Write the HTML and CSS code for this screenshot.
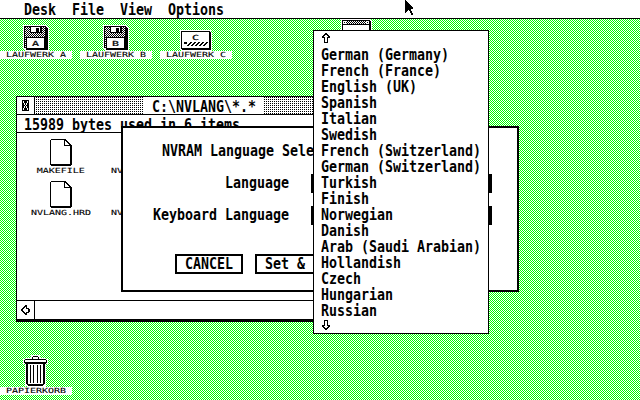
FILE: index.html
```
<!DOCTYPE html>
<html lang="en">
<head>
<meta charset="utf-8">
<title>Desktop</title>
<link rel="stylesheet" href="styles.css">
</head>
<body>
<div class="screen">
  <svg class="wallpaper" width="640" height="400" shape-rendering="crispEdges">
    <defs><pattern id="green" width="2" height="2" patternUnits="userSpaceOnUse"><rect width="2" height="2" fill="#ffffff"/><path d="M0 0h1v1H0zM1 1h1v1H1z" fill="#00ff00"/></pattern></defs>
    <rect width="640" height="400" fill="url(#green)"/>
  </svg>
  <nav class="menubar">
    <span class="t w4">Desk</span><span class="t w4">File</span><span class="t w4">View</span><span class="t w7">Options</span>
  </nav>

  <div class="icon drive-a">
    <svg width="26" height="26" viewBox="0 0 26 26" shape-rendering="crispEdges">
      <path d="M0 0h23l3 3v23H2L0 24z" fill="#fff"/>
      <path d="M1 1h21l3 3v21H3l-2-2z"/>
      <path d="M2 2h20v22H2z" fill="url(#dither)"/>
      <path d="M7 1h12v7H7z"/><path d="M8 2h9v5H8z" fill="#fff"/><path d="M13 3h3v4h-3z"/>
      <path d="M3 12h19v12H3z"/><path d="M4 13h17v10H4z" fill="#fff"/>
      <text x="9" y="21" textLength="7" lengthAdjust="spacingAndGlyphs" class="letter">A</text>
    </svg>
    <div class="label"><span class="s">LAUFWERK A</span></div>
  </div>
  <div class="icon drive-b">
    <svg width="26" height="26" viewBox="0 0 26 26" shape-rendering="crispEdges">
      <path d="M0 0h23l3 3v23H2L0 24z" fill="#fff"/>
      <path d="M1 1h21l3 3v21H3l-2-2z"/>
      <path d="M2 2h20v22H2z" fill="url(#dither)"/>
      <path d="M7 1h12v7H7z"/><path d="M8 2h9v5H8z" fill="#fff"/><path d="M13 3h3v4h-3z"/>
      <path d="M3 12h19v12H3z"/><path d="M4 13h17v10H4z" fill="#fff"/>
      <text x="9" y="21" textLength="7" lengthAdjust="spacingAndGlyphs" class="letter">B</text>
    </svg>
    <div class="label"><span class="s">LAUFWERK B</span></div>
  </div>
  <div class="icon drive-c">
    <svg width="32" height="21" viewBox="0 0 32 21" shape-rendering="crispEdges">
      <path d="M0 0h31v2h1v19H1v-2H0z" fill="#fff"/>
      <path d="M1 1h29v1h1v18H2v-1H1z"/><path d="M2 2h27v16H2z" fill="#fff"/>
      <path d="M4 12h3v2H4z"/>
      <path d="M10 12h2v1h-1v1h-1v1H9v1H7v-1h1v-1h1v-1h1zM14 12h2v1h-1v1h-1v1h-1v1h-2v-1h1v-1h1v-1h1zM18 12h2v1h-1v1h-1v1h-1v1h-2v-1h1v-1h1v-1h1zM22 12h2v1h-1v1h-1v1h-1v1h-2v-1h1v-1h1v-1h1zM26 12h2v1h-1v1h-1v1h-1v1h-2v-1h1v-1h1v-1h1z"/>
      <text x="12" y="10" textLength="7" lengthAdjust="spacingAndGlyphs" class="letter">C</text>
    </svg>
    <div class="label"><span class="s">LAUFWERK C</span></div>
  </div>
  <div class="icon hidden-icon">
    <svg width="31" height="14" viewBox="0 0 31 14" shape-rendering="crispEdges">
      <path d="M0 0h30v1h1v13H0z" fill="#fff"/>
      <path d="M1 1h28v1h1v12H1z"/><path d="M5 2h20v3H5z" fill="url(#dither)"/>
      <path d="M2 2h3v3H2zM25 2h3v3h-3zM2 6h26v8H2z" fill="#fff"/><path d="M3 3h1v1H3zM26 3h1v1h-1z"/>
    </svg>
  </div>
  <div class="icon trash">
    <svg width="26" height="32" viewBox="0 0 26 32" shape-rendering="crispEdges">
      <path d="M8 0h9v3h6v1h2v5h-2v22h-1v1H4v-1H2V9H0V4h2V3h6z" fill="#fff"/>
      <path d="M10 1h5v1h1v2h7v1h1v3h-1v1h-1v20h-1v1h-1v1H5v-1H4v-1H3V9H2V8H1V5h1V4h7V2h1z"/>
      <path d="M10 2h5v2h-5zM2 5h21v2H2zM5 9h15v20H5z" fill="#fff"/>
      <path d="M7 10h1v18H7zM10 10h1v18h-1zM14 10h1v18h-1zM17 10h1v18h-1z"/>
    </svg>
    <div class="label"><span class="s">PAPIERKORB</span></div>
  </div>

  <section class="window">
    <header class="titlebar">
      <div class="closer"><svg width="8" height="11" viewBox="0 0 8 11" shape-rendering="crispEdges"><path d="M0 0h7v11H0z"/><path d="M1 1h1v2H1zM5 1h1v2H5zM2 3h1v2H2zM4 3h1v2H4zM3 5h1v1H3zM2 6h1v2H2zM4 6h1v2H4zM1 8h1v2H1zM5 8h1v2H5z" fill="#fff"/></svg></div>
      <div class="title"><span class="t w13">C:\NVLANG\*.*</span></div>
    </header>
    <div class="info"><span class="t">15989 bytes used in 6 items</span></div>
    <div class="files">
      <div class="file"><svg width="22" height="27" viewBox="0 0 22 27" shape-rendering="crispEdges"><use href="#doc"/></svg><span class="s">MAKEFILE</span></div>
      <div class="file"><span class="s cut">NV</span></div>
      <div class="file"><svg width="22" height="27" viewBox="0 0 22 27" shape-rendering="crispEdges"><use href="#doc"/></svg><span class="s">NVLANG.HRD</span></div>
      <div class="file"><span class="s cut">NV</span></div>
    </div>
    <footer class="scroll"><div class="left"><svg width="9" height="10" viewBox="0 0 9 10" shape-rendering="crispEdges"><path d="M0 4h1V3h1V2h1V1h1V0h2v3h2v1h1v3H8v1H6v2H4V9H3V8H2V7H1V6H0z"/><path d="M2 4h1V3h1V2h1v2h2v3H5v1H4V7H3V6H2z" fill="#fff"/></svg></div></footer>
  </section>

  <section class="dialog">
    <div class="heading"><span class="t">NVRAM Language Sele</span></div>
    <div class="field first"><span class="t w8">Language</span><i class="popup"></i></div>
    <div class="field"><span class="t w17">Keyboard Language</span><i class="popup"></i></div>
    <div class="buttons"><div class="button"><span class="t w6">CANCEL</span></div><div class="button wide"><span class="t">Set &amp;</span></div></div>
  </section>

  <div class="menu">
    <svg class="arrow" width="8" height="10" viewBox="0 0 8 10" shape-rendering="crispEdges"><use href="#up"/></svg>
    <ul>
      <li><span class="t">German (Germany)</span></li>
      <li><span class="t">French (France)</span></li>
      <li><span class="t">English (UK)</span></li>
      <li><span class="t">Spanish</span></li>
      <li><span class="t">Italian</span></li>
      <li><span class="t">Swedish</span></li>
      <li><span class="t">French (Switzerland)</span></li>
      <li><span class="t">German (Switzerland)</span></li>
      <li><span class="t">Turkish</span></li>
      <li><span class="t">Finish</span></li>
      <li><span class="t">Norwegian</span></li>
      <li><span class="t">Danish</span></li>
      <li><span class="t">Arab (Saudi Arabian)</span></li>
      <li><span class="t">Hollandish</span></li>
      <li><span class="t">Czech</span></li>
      <li><span class="t">Hungarian</span></li>
      <li><span class="t">Russian</span></li>
    </ul>
    <svg class="arrow" width="8" height="10" viewBox="0 0 8 10" shape-rendering="crispEdges"><use href="#up" transform="translate(0 10) scale(1 -1)"/></svg>
  </div>

  <svg class="pointer" width="10" height="16" viewBox="0 0 10 16" shape-rendering="crispEdges"><path d="M0 0h1v1h1v1h1v1h1v1h1v1h1v1h1v1h1v2H6v2h1v2h1v2H6v-2H5v-2H4v-1H3v1H2v1H1v1H0z"/></svg>

  <svg class="defs" width="0" height="0">
    <defs>
      <pattern id="dither" width="2" height="2" patternUnits="userSpaceOnUse"><path d="M0 0h2v2H0z" fill="#fff"/><path d="M0 0h1v1H0zM1 1h1v1H1z"/></pattern>
      <g id="doc"><path d="M1 0h15v1h1v1h1v1h1v1h1v1h1v1h1v20h-1v1H1v-1H0V1h1z"/><path d="M1 1h13v6h6v18H1z" fill="#fff"/><path d="M15 2h1v1h1v1h1v1h1v1h-4z" fill="#fff"/></g>
      <g id="up"><path d="M3 0h2v1h1v1h1v1h1v2H6v5H2V5H0V3h1V2h1V1h1z"/><path d="M3 2h2v1h1v1H5v5H3V4H2V3h1z" fill="#fff"/></g>
    </defs>
  </svg>
</div>
</body>
</html>
```
FILE: styles.css
```
* { box-sizing: border-box; }
body { margin: 0; }
.screen {
  position: relative;
  width: 640px;
  height: 400px;
  overflow: hidden;
  color: #000;
  background: #80ff80;
}
svg { display: block; flex: none; }
.wallpaper { position: absolute; left: 0; top: 0; }
/* Tall system face: 8px cell */
.t {
  display: block;
  width: 0;
  white-space: pre;
  font: bold 16px/16px "DejaVu Sans Mono", monospace;
  transform: scaleX(.8306);
  transform-origin: 0 0;
}
.w4 { width: 32px; }
.w6 { width: 48px; }
.w7 { width: 56px; }
.w8 { width: 64px; }
.w13 { width: 104px; }
.w17 { width: 136px; }
/* Small icon face: 6px cell */
.s {
  display: block;
  white-space: pre;
  font: 7px/7px "DejaVu Sans Mono", monospace;
  -webkit-text-stroke: .1px #000;
  transform: scaleX(1.424);
}
.letter { font: 7px "DejaVu Sans Mono", monospace; stroke: #000; stroke-width: .2px; }
.menubar {
  position: relative;
  display: flex;
  gap: 16px;
  height: 19px;
  padding: 2px 0 0 24px;
  background: #fff;
  border-bottom: 1px solid #000;
}
.icon { position: absolute; display: flex; flex-direction: column; align-items: center; width: 72px; }
.label { display: flex; justify-content: center; width: 72px; height: 8px; padding-top: 1px; background: #fff; }
.drive-a { left: 0; top: 25px; }
.drive-b { left: 80px; top: 25px; }
.drive-c { left: 160px; top: 30px; }
.hidden-icon { left: 320px; top: 19px; }
.trash { left: 0; top: 355px; }
.window {
  position: absolute;
  left: 16px;
  top: 96px;
  width: 400px;
  height: 226px;
  display: flex;
  flex-direction: column;
  background: #fff;
  border: 1px solid #000;
  border-bottom-width: 3px;
}
.titlebar { display: flex; height: 18px; border-bottom: 1px solid #000; background: conic-gradient(#000 25%, #fff 0) 0 0 / 2px 2px; }
.closer { display: grid; place-items: center; width: 18px; background: #fff; border-right: 1px solid #000; }
.title { width: 120px; height: 17px; margin-left: 109px; padding: 2px 0 0 8px; background: #fff; }
.info { height: 18px; padding: 2px 0 0 7px; overflow: hidden; border-bottom: 1px solid #000; }
.files { flex: 1; display: grid; grid-template-columns: 72px 72px; grid-template-rows: 42px 42px; padding: 1px 0 0 8px; }
.file { display: flex; flex-direction: column; align-items: center; justify-content: flex-end; gap: 2px; padding-bottom: 1px; }
.file .cut { align-self: flex-start; margin-left: 14px; transform-origin: 0 0; }
.scroll { height: 19px; border-top: 1px solid #000; }
.left { display: grid; place-items: center; width: 18px; height: 18px; border-right: 1px solid #000; }
.dialog {
  position: absolute;
  left: 121px;
  top: 126px;
  width: 398px;
  height: 166px;
  background: #fff;
  border: 2px solid #000;
}
.heading { padding: 15px 0 0 38.5px; }
.field { display: flex; justify-content: flex-end; gap: 22.5px; height: 20px; margin: 12px 25px 0 0; }
.field.first { margin-top: 15px; }
.field .t { margin-top: 1px; }
.popup { width: 181px; height: 19px; background: #000; }
.buttons { display: flex; gap: 12px; padding: 28px 0 0 52px; }
.button { width: 68px; height: 20px; padding: 0 0 0 8px; border: 2px solid #000; }
.button.wide { width: 110px; }
.menu {
  position: absolute;
  left: 313px;
  top: 30px;
  width: 176px;
  height: 304px;
  padding: 2px 7px 0;
  background: #fff;
  border: 1px solid #000;
}
.menu ul { margin: 4px 0 0; padding: 0; list-style: none; }
.menu li { height: 16px; }
.menu li .t { margin-left: -.5px; }
.menu .arrow { margin: 0 0 0 1px; }
.menu ul + .arrow { margin-top: 1px; }
.pointer { position: absolute; left: 405px; top: 0; }
.defs { position: absolute; }
```
